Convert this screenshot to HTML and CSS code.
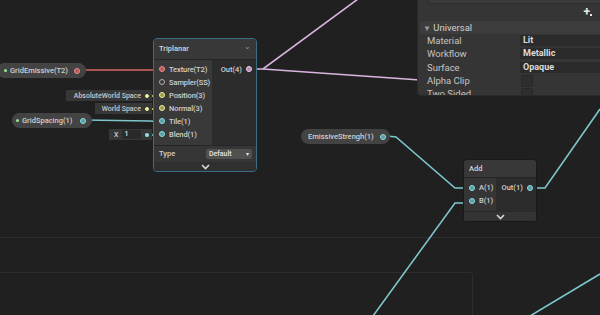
FILE: index.html
```html
<!DOCTYPE html>
<html lang="en">
<head>
    <meta charset="UTF-8">
    <title>Shader Graph</title>
    <link rel="stylesheet" href="styles.css">
</head>
<body>
    <div class="graph">
        <!-- backdrop lines -->
        <div class="rule"></div>
        <div class="group-box"></div>

        <svg class="wires" width="600" height="315" viewBox="0 0 600 315">
            <polyline points="84,70 161,70" stroke="#d96464" />
            <polyline points="149,96 161,96" stroke="#e4e47a" />
            <polyline points="149,109 161,109" stroke="#e4e47a" />
            <polyline points="84,120 150,121 161,122" stroke="#7cc6cc" />
            <polyline points="149,135 161,135" stroke="#7cc6cc" />
            <polyline points="250,69 263,69 358,-1" stroke="#dcb4e2" />
            <polyline points="263,69 420,80" stroke="#dcb4e2" />
            <polyline points="387,136 396,137 455,188 470,188" stroke="#7cc6cc" />
            <polyline points="470,203 455,203 373,316" stroke="#7cc6cc" />
            <polyline points="531,188 545,188 600,109" stroke="#7cc6cc" />
            <polyline points="600,274 530,316" stroke="#7cc6cc" />
        </svg>

        <!-- properties -->
        <div class="pill pill-emissive">
            <span class="pill-dot"></span>
            <span class="pill-name">GridEmissive(T2)</span>
            <span class="port port-red on"></span>
        </div>
        <div class="pill pill-spacing">
            <span class="pill-dot"></span>
            <span class="pill-name">GridSpacing(1)</span>
            <span class="port port-cyan on"></span>
        </div>
        <div class="pill pill-strength">
            <span class="pill-dot"></span>
            <span class="pill-name">EmissiveStrengh(1)</span>
            <span class="port port-cyan on"></span>
        </div>

        <!-- inline default values -->
        <div class="slot-value val-abs">AbsoluteWorld Space <span class="tiny-port yellow"></span></div>
        <div class="slot-value val-world">World Space <span class="tiny-port yellow"></span></div>
        <div class="slot-value val-blend">X <span class="num">1</span> <span class="tiny-port cyan"></span></div>

        <!-- Triplanar -->
        <div class="node node-triplanar selected">
            <div class="node-title">Triplanar <span class="caret">&#8964;</span></div>
            <div class="node-body">
                <div class="inputs">
                    <div class="slot"><span class="port port-red on"></span>Texture(T2)</div>
                    <div class="slot"><span class="port port-grey"></span>Sampler(SS)</div>
                    <div class="slot"><span class="port port-yellow on"></span>Position(3)</div>
                    <div class="slot"><span class="port port-yellow on"></span>Normal(3)</div>
                    <div class="slot"><span class="port port-cyan on"></span>Tile(1)</div>
                    <div class="slot"><span class="port port-cyan on"></span>Blend(1)</div>
                </div>
                <div class="outputs">
                    <div class="slot out">Out(4)<span class="port port-pink on"></span></div>
                </div>
            </div>
            <div class="node-setting">
                <span>Type</span>
                <span class="dropdown">Default <span class="arrow">&#9662;</span></span>
            </div>
            <div class="node-foot">
                <svg width="9" height="6" viewBox="0 0 9 6"><polyline points="1,1 4.5,4.5 8,1" fill="none" stroke="#d8d8d8" stroke-width="1.6"/></svg>
            </div>
        </div>

        <!-- Add -->
        <div class="node node-add">
            <div class="node-title">Add</div>
            <div class="node-body">
                <div class="inputs">
                    <div class="slot"><span class="port port-cyan on"></span>A(1)</div>
                    <div class="slot"><span class="port port-cyan on"></span>B(1)</div>
                </div>
                <div class="outputs">
                    <div class="slot out">Out(1)<span class="port port-cyan on"></span></div>
                </div>
            </div>
            <div class="node-foot">
                <svg width="9" height="6" viewBox="0 0 9 6"><polyline points="1,1 4.5,4.5 8,1" fill="none" stroke="#d8d8d8" stroke-width="1.6"/></svg>
            </div>
        </div>
        <div class="add-shadow"></div>

        <!-- graph inspector -->
        <div class="inspector">
            <div class="insp-top"></div>
            <div class="insp-plus">+<span class="plus-dot"></span></div>
            <div class="insp-section"><span class="tri">&#9660;</span> Universal</div>
            <div class="insp-row"><span class="insp-label">Material</span><span class="insp-field">Lit</span></div>
            <div class="insp-row"><span class="insp-label">Workflow</span><span class="insp-field">Metallic</span></div>
            <div class="insp-row"><span class="insp-label">Surface</span><span class="insp-field">Opaque</span></div>
            <div class="insp-row"><span class="insp-label">Alpha Clip</span><span class="insp-check"></span></div>
            <div class="insp-row"><span class="insp-label">Two Sided</span><span class="insp-check"></span></div>
        </div>
    </div>
</body>
</html>
```
FILE: styles.css
```css
body {
    margin: 0;
    background: #202020;
    font-family: Roboto, 'Liberation Sans', sans-serif;
    color: #c8c8c8;
    overflow: hidden;
}

.graph {
    position: relative;
    width: 600px;
    height: 315px;
    overflow: hidden;
    background: #202020;
}

.rule {
    position: absolute;
    left: 0;
    top: 237px;
    width: 600px;
    height: 1px;
    background: #2d2d2d;
}

.group-box {
    position: absolute;
    left: -4px;
    top: 272px;
    width: 475px;
    height: 60px;
    border: 1px solid #2d2d2d;
    border-radius: 3px;
}

.wires {
    position: absolute;
    left: 0;
    top: 0;
}

.wires polyline {
    fill: none;
    stroke-width: 1.6;
}

/* ports */
.port {
    display: inline-block;
    box-sizing: border-box;
    width: 6px;
    height: 6px;
    border-radius: 50%;
    border: 1px solid #8a8a8a;
    flex: none;
}

.port.on { border-width: 1.5px; }
.port-red { border-color: #ee8a8a; background: #b85a5a; }
.port-yellow { border-color: #eeee9a; background: #9a9a50; }
.port-cyan { border-color: #8fdde2; background: #5a9da2; }
.port-pink { border-color: #f3d1f0; background: #b08fb0; }
.port-grey { border-color: #b0b0b0; background: transparent; }

/* property pills */
.pill {
    position: absolute;
    display: flex;
    align-items: center;
    height: 15px;
    background: #434343;
    border-radius: 8px;
    font-size: 7.5px;
    font-weight: 500;
    color: #cfcfcf;
    padding: 0 6px 0 4px;
    box-sizing: border-box;
}

.pill-dot {
    width: 3px;
    height: 3px;
    border-radius: 50%;
    background: #9ee68a;
    margin-right: 3px;
}

.pill-name {
    flex: 1;
    margin-right: 6px;
}

.pill-emissive { left: -3px; top: 63px; width: 89px; padding-left: 7px; }
.pill-spacing { left: 12px; top: 113px; width: 80px; }
.pill-strength { left: 301px; top: 129px; width: 89px; }

/* inline slot values */
.slot-value {
    position: absolute;
    display: flex;
    align-items: center;
    justify-content: flex-end;
    height: 11px;
    padding: 0 3px 0 5px;
    background: #373737;
    font-size: 7px;
    font-weight: 500;
    color: #c8c8c8;
    gap: 4px;
    box-sizing: border-box;
}

.val-abs { left: 66px; top: 90px; width: 86px; }
.val-world { left: 95px; top: 103px; width: 57px; }
.val-blend { left: 109px; top: 129px; width: 43px; justify-content: flex-start; }

.val-blend .num {
    display: inline-block;
    width: 17px;
    height: 9px;
    line-height: 9px;
    background: #2a2a2a;
    border-radius: 2px;
    padding-left: 2px;
    color: #e0e0e0;
}

.val-blend .tiny-port { margin-left: auto; }

.tiny-port {
    width: 4px;
    height: 4px;
    border-radius: 50%;
    box-sizing: border-box;
    border: 1px solid;
}

.tiny-port.yellow { border-color: #f0f09a; background: #f0f09a; }
.tiny-port.cyan { border-color: #8fdde2; background: #8fdde2; }

/* nodes */
.node {
    position: absolute;
    background: #2c2c2c;
    border: 1px solid #191919;
    border-radius: 4px;
    font-size: 7.5px;
    font-weight: 500;
    color: #cfcfcf;
    display: flex;
    flex-direction: column;
    overflow: hidden;
}

.node.selected {
    border: 1.5px solid #3a6d86;
}

.node-title {
    display: flex;
    align-items: center;
    justify-content: space-between;
    height: 21px;
    padding: 0 5px;
    background: #383838;
    border-bottom: 1px solid #262626;
    font-size: 7.5px;
    color: #d6d6d6;
}

.caret {
    font-size: 8px;
    color: #9a9a9a;
    margin-top: -5px;
}

.node-body {
    display: flex;
}

.inputs {
    background: #393939;
    padding: 3px 0 4px;
}

.outputs {
    flex: 1;
    background: #2c2c2c;
    padding: 3px 0 4px;
}

.slot {
    display: flex;
    align-items: center;
    gap: 4px;
    height: 13px;
    padding: 0 3px 0 5px;
    white-space: nowrap;
}

.slot.out {
    justify-content: flex-end;
    padding: 0 4px 0 5px;
}

.node-triplanar { left: 153px; top: 38px; width: 102px; height: 132px; }
.node-triplanar .inputs { width: 58px; }
.node-triplanar .inputs .slot { letter-spacing: -0.1px; }

.node-setting {
    display: flex;
    align-items: center;
    justify-content: space-between;
    height: 17px;
    padding: 0 4px 0 5px;
    background: #363636;
    border-top: 1px solid #262626;
}

.dropdown {
    display: flex;
    justify-content: space-between;
    width: 40px;
    height: 10px;
    line-height: 10px;
    padding: 0 3px;
    background: #505050;
    border-radius: 2px;
    font-size: 7px;
    color: #e4e4e4;
}

.dropdown .arrow { font-size: 6px; }

.node-foot {
    flex: 1;
    display: flex;
    justify-content: center;
    align-items: center;
    background: #2f2f2f;
    min-height: 9px;
}

.node-add { left: 463px; top: 159px; width: 72px; height: 61px; }
.node-add .inputs { width: 35px; background: #353535; }
.node-add .node-foot { background: #343434; border-top: 1px solid #2a2a2a; }

.add-shadow {
    position: absolute;
    left: 464px;
    top: 220px;
    width: 72px;
    height: 1px;
    background: #2e2e2e;
}

/* inspector */
.inspector {
    position: absolute;
    left: 417px;
    top: -2px;
    width: 190px;
    height: 96px;
    background: #353535;
    border: 1px solid #2a2a2a;
    border-radius: 4px;
    overflow: hidden;
    font-size: 9.5px;
    color: #c4c4c4;
}

.insp-top {
    margin-left: 10px;
    height: 4px;
    border: 1px solid #2c2c2c;
    border-top: none;
    background: #3b3b3b;
}

.insp-plus {
    height: 14px;
    text-align: right;
    padding-right: 16px;
    font-size: 12px;
    line-height: 16px;
    color: #e8e8e8;
    font-weight: bold;
}

.plus-dot {
    display: inline-block;
    width: 2px;
    height: 2px;
    background: #e8e8e8;
}

.insp-section {
    height: 13px;
    line-height: 13px;
    margin: 3px 0 0 2px;
    padding-left: 3px;
    background: #3c3c3c;
    color: #d0d0d0;
    font-size: 9.5px;
}

.insp-section .tri {
    color: #9a9a9a;
    font-size: 8px;
}

.insp-row {
    display: flex;
    align-items: center;
    height: 13.3px;
    padding-left: 9px;
}

.insp-label {
    width: 93px;
}

.insp-field {
    flex: 1;
    height: 11px;
    line-height: 11px;
    padding-left: 3px;
    background: #2b2b2b;
    font-weight: bold;
    color: #dadada;
    font-size: 9px;
}

.insp-check {
    width: 10px;
    height: 10px;
    margin-left: 1px;
    background: #2e2e2e;
    border: 1px solid #282828;
    border-radius: 2px;
}
```
